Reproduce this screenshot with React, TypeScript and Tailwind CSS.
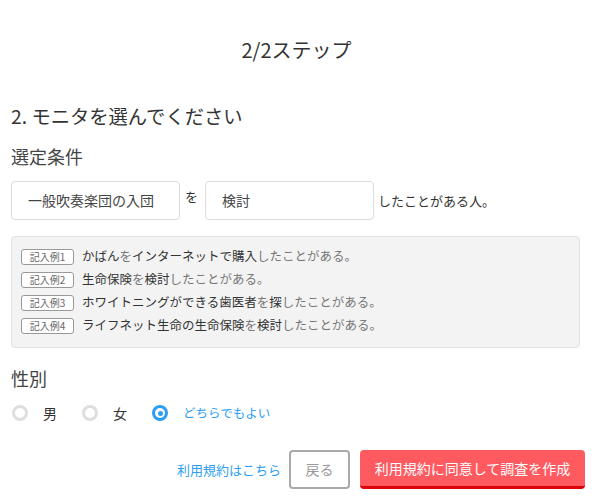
const examples = [
  [
    { t: "かばん", d: true },
    { t: "を", d: false },
    { t: "インターネットで購入", d: true },
    { t: "したことがある。", d: false },
  ],
  [
    { t: "生命保険", d: true },
    { t: "を", d: false },
    { t: "検討", d: true },
    { t: "したことがある。", d: false },
  ],
  [
    { t: "ホワイトニングができる歯医者", d: true },
    { t: "を", d: false },
    { t: "探", d: true },
    { t: "したことがある。", d: false },
  ],
  [
    { t: "ライフネット生命の生命保険", d: true },
    { t: "を", d: false },
    { t: "検討", d: true },
    { t: "したことがある。", d: false },
  ],
];

const genders = [
  { label: "男", checked: false },
  { label: "女", checked: false },
  { label: "どちらでもよい", checked: true },
];

export default function App() {
  return (
    <div
      className="w-[593px] min-h-[497px] bg-white px-[11px] text-[#333]"
      style={{ fontFamily: '"Noto Sans CJK JP", "Noto Sans", sans-serif' }}
    >
      {/* step title */}
      <h1 className="pt-[36px] text-center text-[20px] leading-[28px] text-[#333]">2/2ステップ</h1>

      <h2 className="mt-[38px] text-[19.3px] leading-[28px] text-[#333]">2. モニタを選んでください</h2>

      <h3 className="mt-[14px] text-[18px] leading-[24px] text-[#444]">選定条件</h3>

      {/* condition inputs */}
      <div className="mt-[13px] flex items-start">
        <div className="flex h-[39px] w-[169px] items-center rounded border border-[#dcdcdc] px-4 text-[14px] text-[#444]">
          一般吹奏楽団の入団
        </div>
        <span className="mx-[5px] mt-[8px] w-[15px] text-[13px] leading-[16px]">を</span>
        <div className="flex h-[39px] w-[169px] items-center rounded border border-[#dcdcdc] px-4 text-[14px] text-[#444]">
          検討
        </div>
        <span className="ml-1 self-center text-[13px]">したことがある人。</span>
      </div>

      {/* examples */}
      <div className="mt-4 w-[569px] rounded border border-[#e2e2e2] bg-[#f3f3f3] pb-[10px] pl-[9px] pt-2">
        {examples.map((row, i) => (
          <div key={i} className="flex h-[23px] items-center">
            <span className="mr-[8px] flex h-[16px] w-[53px] items-center justify-center rounded-[3px] border border-[#999] bg-white text-[10px] leading-none text-[#666]">
              記入例{i + 1}
            </span>
            <span className="text-[12.5px]">
              {row.map((p, j) => (
                <span key={j} className={p.d ? "text-[#333]" : "text-[#777]"}>
                  {p.t}
                </span>
              ))}
            </span>
          </div>
        ))}
      </div>

      <h3 className="mt-[18px] text-[18px] leading-[24px] text-[#444]">性別</h3>

      {/* gender radios */}
      <div className="mt-[11px] flex h-[24px] items-center">
        {genders.map((g) => (
          <label key={g.label} className="mr-[14px] flex items-center">
            {g.checked ? (
              <span className="ml-px flex h-[16px] w-[16px] items-center justify-center rounded-full border-[3px] border-[#2d9ef2] bg-white">
                <span className="h-[5px] w-[5px] rounded-full bg-[#2d9ef2]" />
              </span>
            ) : (
              <span className="ml-px h-[16px] w-[16px] rounded-full border-[3px] border-[#dedede] bg-white" />
            )}
            <span
              className={
                g.checked ? "ml-[15px] text-[12.5px] text-[#2d9ef2]" : "ml-[15px] w-[24px] text-[14px] text-[#333]"
              }
            >
              {g.label}
            </span>
          </label>
        ))}
      </div>

      {/* footer */}
      <div className="mt-[25px] flex items-center justify-end">
        <a className="mr-[8px] text-[13px] text-[#2d9ef2]">利用規約はこちら</a>
        <button className="h-[39px] w-[61px] rounded border-2 border-[#a9a9a9] bg-white text-[14px] text-[#999]">
          戻る
        </button>
        <button className="ml-[10px] mr-[-3px] h-[39px] w-[225px] rounded border-b-[3px] border-[#e0000a] bg-[#ff5a60] text-[14px] text-white">
          利用規約に同意して調査を作成
        </button>
      </div>
    </div>
  );
}
